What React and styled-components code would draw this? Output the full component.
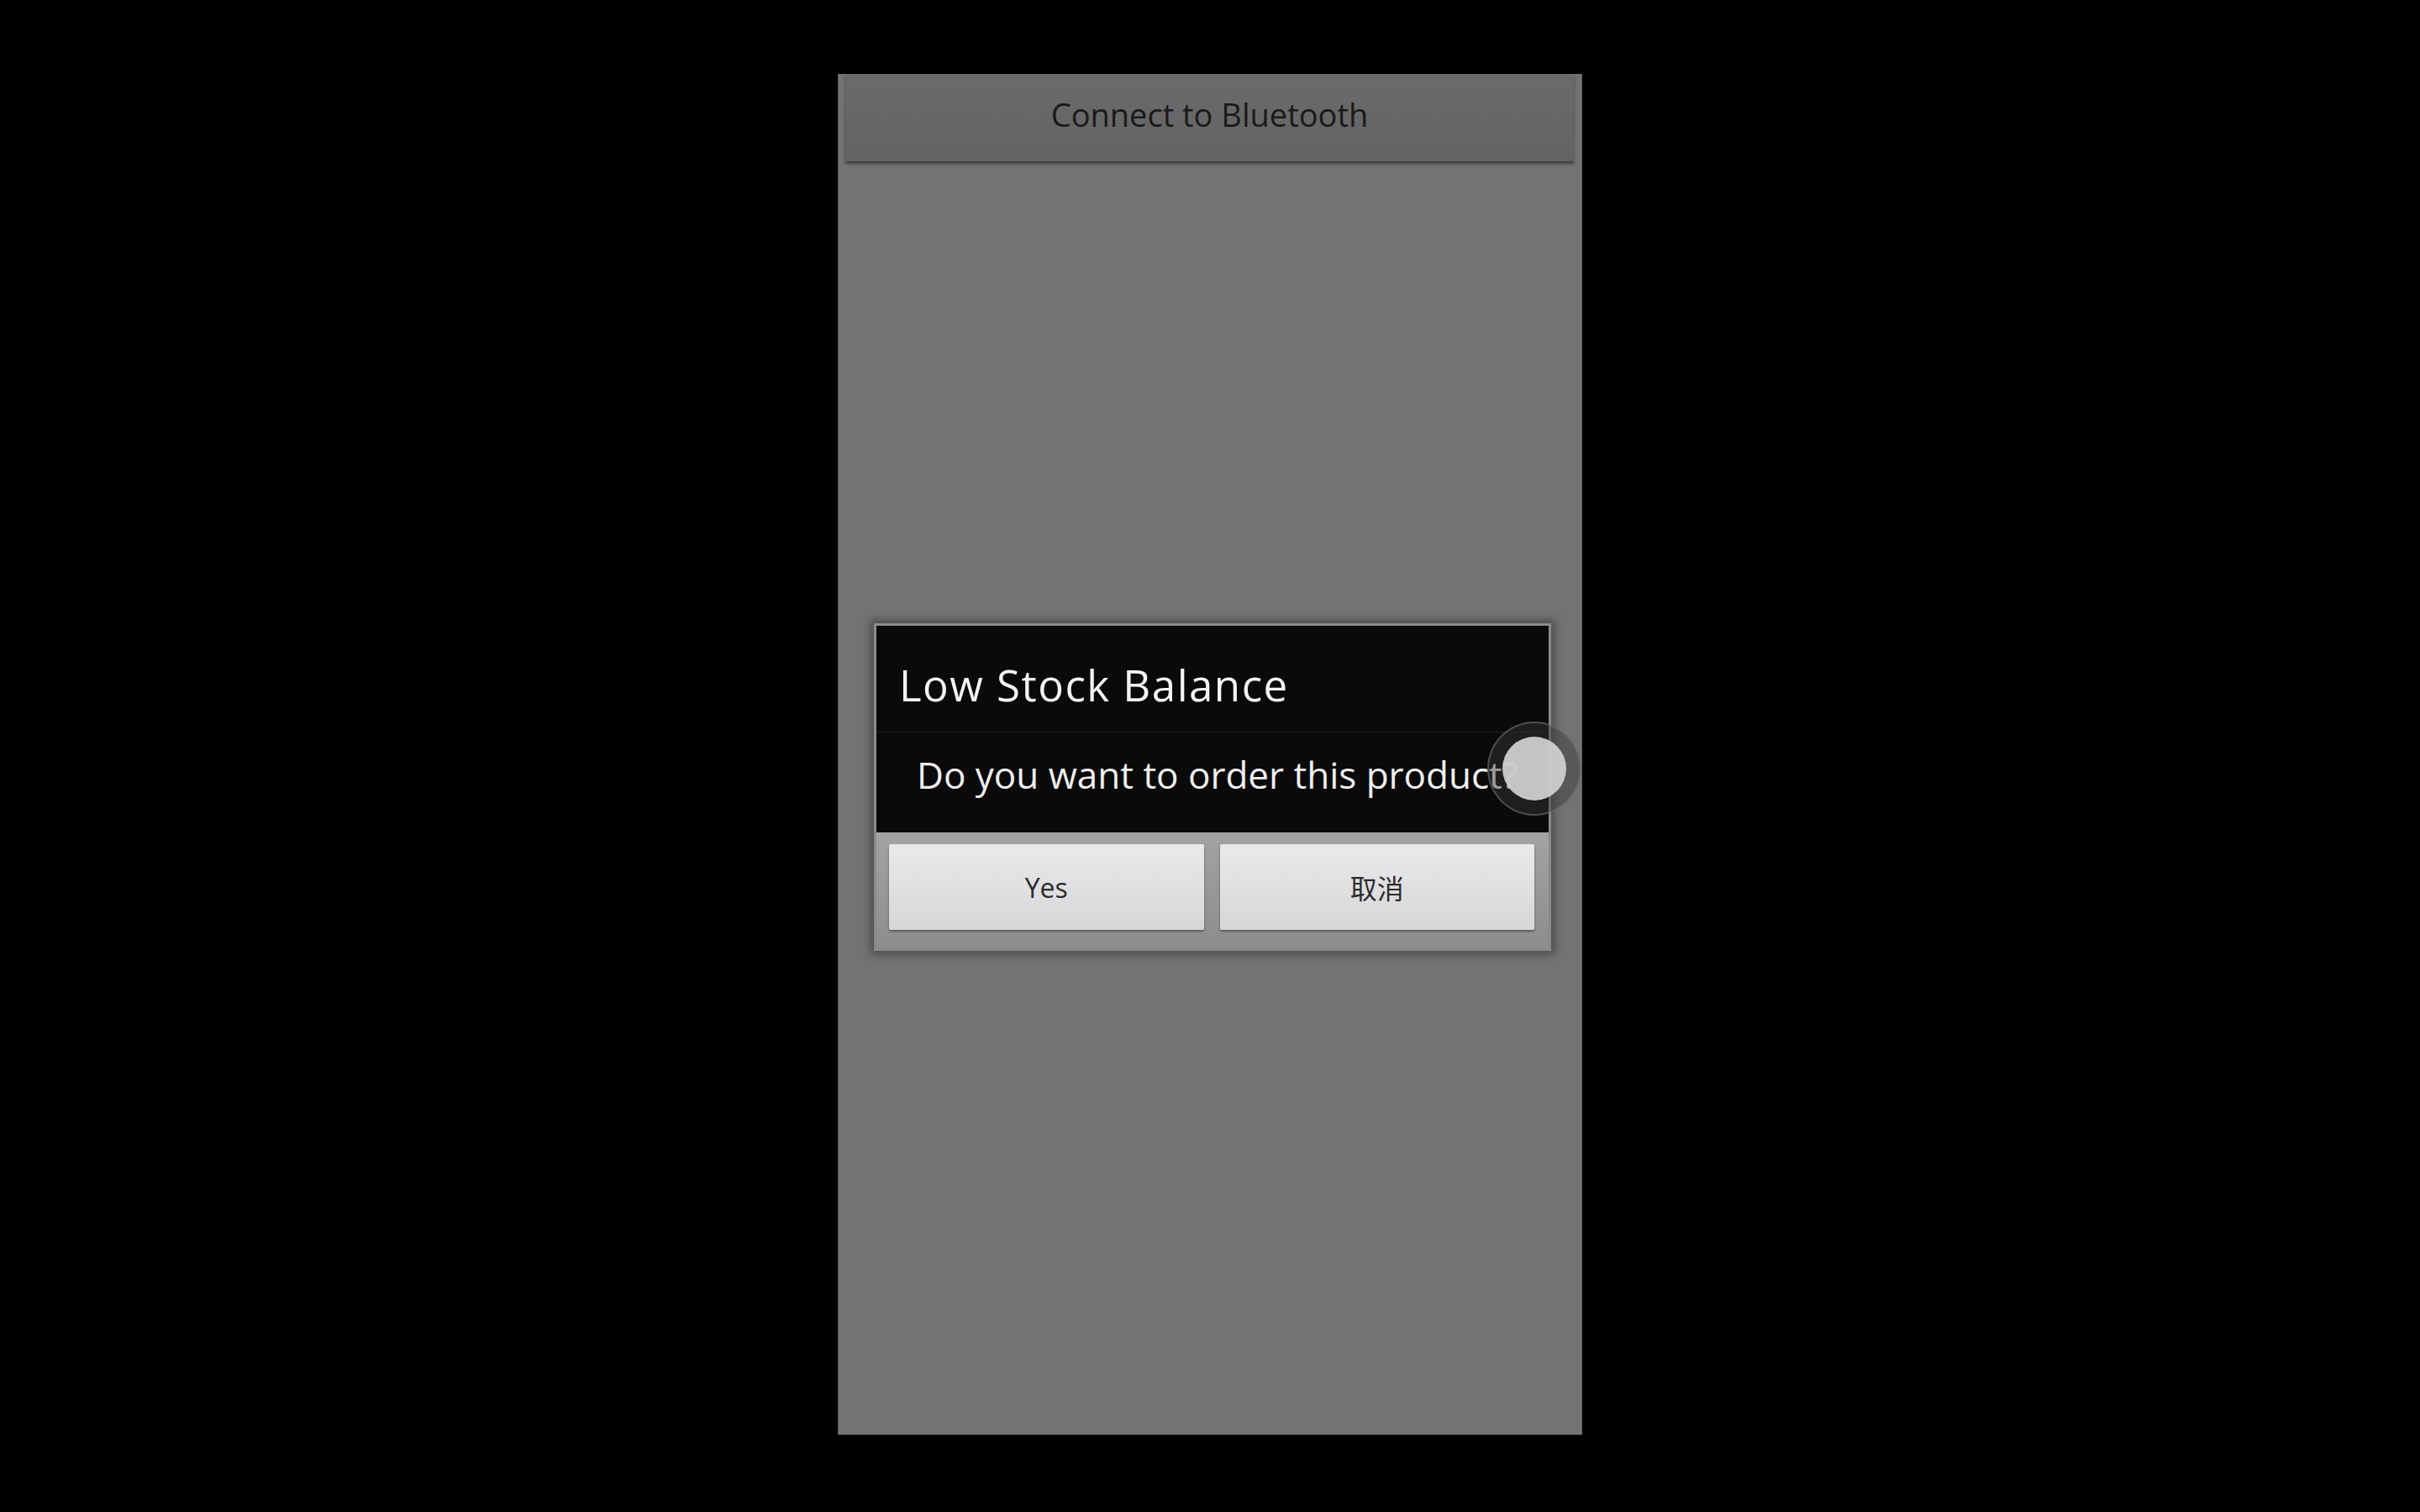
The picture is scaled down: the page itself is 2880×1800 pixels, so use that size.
import styled, { createGlobalStyle } from 'styled-components'

const GlobalStyle = createGlobalStyle`
    html, body {
        margin: 0;
        padding: 0;
        background: #000;
    }
    * {
        box-sizing: border-box;
    }
`

const Stage = styled.div`
    width: 100vw;
    height: 100vh;
    display: flex;
    justify-content: center;
    padding-top: 88px;
    background: #000;
    font-family: 'Open Sans', 'Noto Sans', 'Noto Sans CJK SC', sans-serif;
`

const Phone = styled.div`
    width: 886px;
    height: 1620px;
    background: #737373;
    border-left: 1px solid #5e5e5e;
    border-right: 1px solid #5e5e5e;
    display: flex;
    flex-direction: column;
`

const TopButton = styled.div`
    height: 104px;
    margin: 0 9px 0 8px;
    display: flex;
    align-items: center;
    justify-content: center;
    padding-bottom: 8px;
    background: linear-gradient(#6b6b6b, #636363);
    box-shadow: 0 3px 3px rgba(0, 0, 0, 0.45);
    color: #1a1a1a;
    font-size: 38px;
`

const Screen = styled.div`
    flex: 1;
    display: flex;
    align-items: center;
    justify-content: center;
    padding-bottom: 26px;
`

const Dialog = styled.div`
    position: relative;
    width: 806px;
    margin-left: 6px;
    border: 3px solid #8a8a8a;
    box-shadow: 0 0 10px 4px rgba(0, 0, 0, 0.35);
    background: #8f8f8f;
`

const Title = styled.div`
    background: #0a0a0a;
    color: #f4f4f4;
    font-size: 51px;
    letter-spacing: 1.5px;
    line-height: 60px;
    padding: 40px 0 26px 27px;
    border-bottom: 1px solid #1e1e1e;
`

const Message = styled.div`
    background: #0a0a0a;
    color: #efefef;
    font-size: 44px;
    line-height: 52px;
    padding: 24px 0 43px 48px;
`

const ButtonBar = styled.div`
    display: grid;
    grid-template-columns: 1fr 1fr;
    gap: 19px;
    padding: 13px 17px 22px 15px;
    background: linear-gradient(#a3a3a3, #8d8d8d);
    border-top: 1px solid #b0b0b0;
`

const DialogButton = styled.div`
    height: 102px;
    display: flex;
    align-items: center;
    justify-content: center;
    background: linear-gradient(#e9e9eb, #d7d7d9);
    border-radius: 2px;
    box-shadow: 0 2px 3px rgba(0, 0, 0, 0.4);
    color: #2c2c2c;
    font-size: 32px;
`

const Touch = styled.div`
    position: absolute;
    left: ${(p) => p.$x - 56}px;
    top: ${(p) => p.$y - 56}px;
    width: 112px;
    height: 112px;
    border-radius: 50%;
    background: rgba(55, 55, 55, 0.45);
    border: 2px solid rgba(130, 130, 130, 0.5);
    display: flex;
    align-items: center;
    justify-content: center;

    &::after {
        content: '';
        width: 76px;
        height: 76px;
        border-radius: 50%;
        background: rgba(210, 210, 210, 0.92);
    }
`

export default function App() {
    return (
        <>
            <GlobalStyle />
            <Stage>
                <Phone>
                    <TopButton>Connect to Bluetooth</TopButton>
                    <Screen>
                        <Dialog>
                            <Title>Low Stock Balance</Title>
                            <Message>Do you want to order this product?</Message>
                            <ButtonBar>
                                <DialogButton>Yes</DialogButton>
                                <DialogButton>取消</DialogButton>
                            </ButtonBar>
                            <Touch $x={783} $y={170} />
                        </Dialog>
                    </Screen>
                </Phone>
            </Stage>
        </>
    )
}
